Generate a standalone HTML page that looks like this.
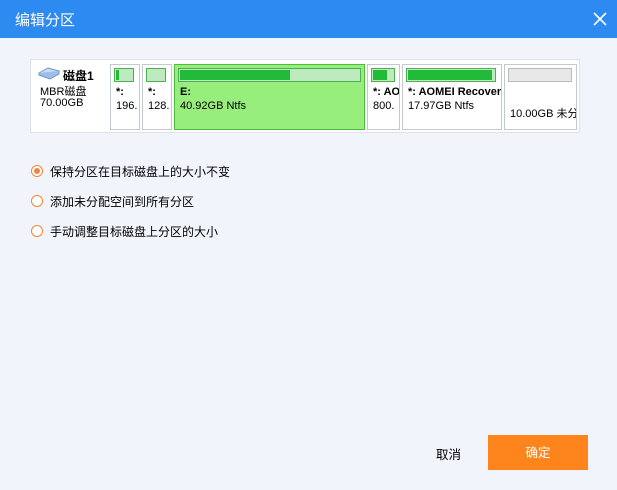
<!DOCTYPE html><html><head><style>
body{margin:0;width:617px;height:490px;background:#f1f4fa;font-family:"Liberation Sans","Noto Sans CJK SC",sans-serif;font-size:12px;position:relative;overflow:hidden;color:#000}
.t{position:absolute;left:0;top:0;width:617px;height:38px;background:#2d8af0;color:#fff}
.t span{position:absolute;left:15px;top:9px;font-size:15px}
.disk{position:absolute;left:30px;top:59px;width:548px;height:72px;background:#fff;border:1px solid #dde2ea}
.p{position:absolute;top:4px;height:64px;border:1px solid #c4c9d1;background:#fff;overflow:hidden;white-space:nowrap;font-size:11px}
.bar{position:absolute;left:3px;top:3px;height:12px;border:1px solid #4caf50;background:#bdebbd}
.bar i{position:absolute;left:1px;top:1px;bottom:1px;background:#22bb39}
.l1{position:absolute;left:5px;top:21px;font-weight:bold}
.l2{position:absolute;left:5px;top:35px}
.r{position:absolute;left:31px;width:10px;height:10px;border:1.5px solid #f4843a;border-radius:50%;background:#fff}
.rt{position:absolute;left:50px;font-size:12px}
</style></head><body>
<div class="t"><span>编辑分区</span>
<svg style="position:absolute;left:593px;top:12px" width="14" height="14"><path d="M1 1L13 13M13 1L1 13" stroke="#fff" stroke-width="1.6"/></svg></div>
<div class="disk">
<svg style="position:absolute;left:7px;top:6px" width="22" height="14"><path d="M1 7L10 2L21 5L12 11Z" fill="#c9dcf5" stroke="#6f95c9"/><path d="M1 7L1 9L12 13L21 8L21 5" fill="#9fbde6" stroke="#6f95c9"/></svg>
<div style="position:absolute;left:32px;top:7px;font-weight:bold">磁盘1</div>
<div style="position:absolute;left:9px;top:23px;font-size:11px">MBR磁盘</div>
<div style="position:absolute;left:9px;top:37px;font-size:11px">70.00GB</div>
<div class="p" style="left:79px;width:28px"><div class="bar" style="width:18px"><i style="width:3px"></i></div><div class="l1">*:</div><div class="l2">196.</div></div>
<div class="p" style="left:111px;width:28px"><div class="bar" style="width:18px"></div><div class="l1">*:</div><div class="l2">128.</div></div>
<div class="p" style="left:143px;width:189px;background:#98ee7c;border-color:#4cbf3a"><div class="bar" style="width:181px"><i style="width:110px"></i></div><div class="l1">E:</div><div class="l2">40.92GB Ntfs</div></div>
<div class="p" style="left:336px;width:31px"><div class="bar" style="width:22px"><i style="width:14px"></i></div><div class="l1">*: AOMEI</div><div class="l2">800.</div></div>
<div class="p" style="left:371px;width:98px"><div class="bar" style="width:88px"><i style="width:84px"></i></div><div class="l1">*: AOMEI Recovery</div><div class="l2">17.97GB Ntfs</div></div>
<div class="p" style="left:473px;width:71px"><div class="bar" style="width:62px;border-color:#bbb;background:#e8e8e8"></div><div class="l2" style="top:40px">10.00GB 未分配</div></div>
</div>
<div class="r" style="top:165px"><div style="position:absolute;left:2px;top:2px;width:6px;height:6px;border-radius:50%;background:#f4843a"></div></div>
<div class="rt" style="top:163px">保持分区在目标磁盘上的大小不变</div>
<div class="r" style="top:195px"></div><div class="rt" style="top:193px">添加未分配空间到所有分区</div>
<div class="r" style="top:225px"></div><div class="rt" style="top:223px">手动调整目标磁盘上分区的大小</div>
<div style="position:absolute;left:436px;top:444px;font-size:12.5px">取消</div>
<div style="position:absolute;left:488px;top:435px;width:100px;height:35px;background:#fd851c;color:#fff;text-align:center;line-height:36px;font-size:12.5px">确定</div>
</body></html>
